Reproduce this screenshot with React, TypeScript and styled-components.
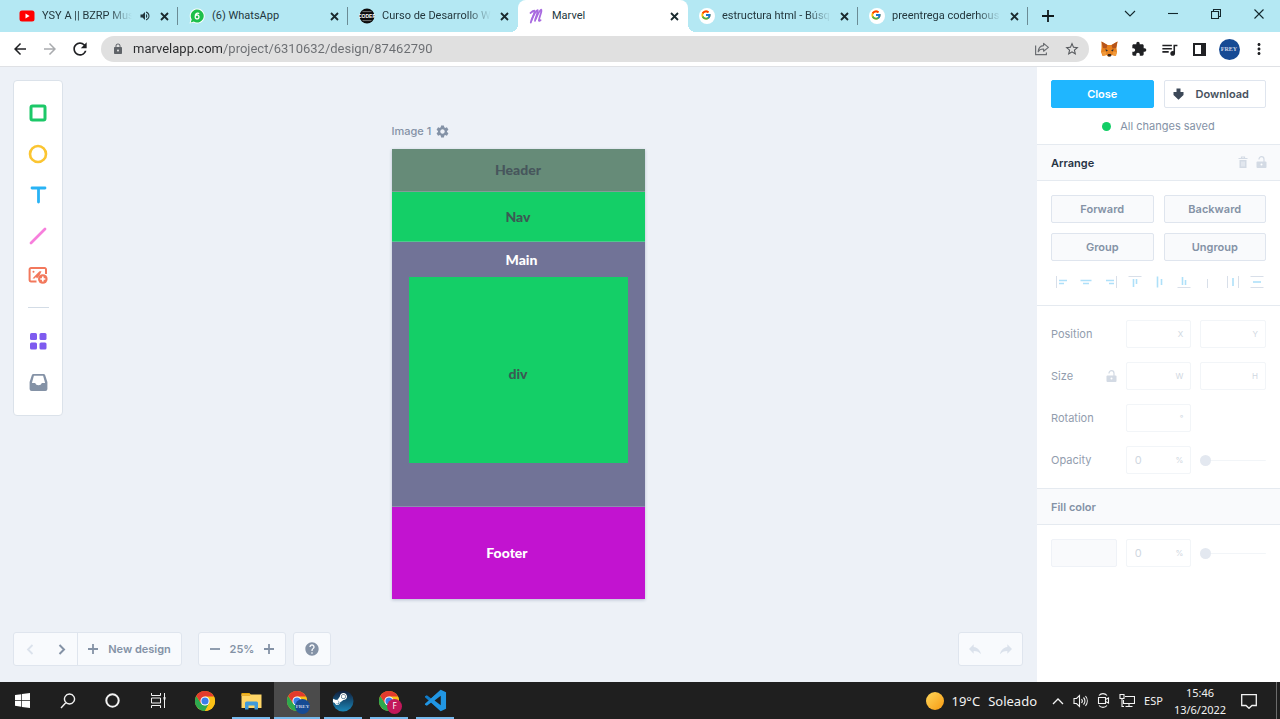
import React from "react";
import styled, { createGlobalStyle, css } from "styled-components";
import { FcGoogle } from "react-icons/fc";
import {
  MdArrowBack,
  MdArrowForward,
  MdRefresh,
  MdLock,
  MdExtension,
  MdQueueMusic,
  MdMoreVert,
  MdStarBorder,
  MdVolumeUp,
  MdSettings,
  MdHelp,
  MdReply,
} from "react-icons/md";
import { FaSteamSymbol } from "react-icons/fa";

const uiFont = `"Noto Sans", "Open Sans", sans-serif`;
const browserFont = `Roboto, "Noto Sans", sans-serif`;
const appFont = `Inter, "Liberation Sans", sans-serif`;

const GlobalStyle = createGlobalStyle`
  *, *::before, *::after { box-sizing: border-box; }
  body { margin: 0; background: #edf1f7; }
  button, input { font: inherit; color: inherit; margin: 0; }
  button { background: none; border: 0; padding: 0; cursor: pointer; }
  svg { display: block; flex: none; }
`;

const Desktop = styled.div`
  min-height: 100vh;
  display: flex;
  flex-direction: column;
  font-family: ${appFont};
`;

/* ---------- Browser chrome ---------- */

const TabStrip = styled.header`
  display: flex;
  height: 32px;
  padding-left: 8px;
  background: #b4e8f3;
  font-family: ${browserFont};
  font-size: 11px;
  color: #23373d;
`;

const Tab = styled.div<{ $active?: boolean; $divider?: boolean }>`
  position: relative;
  display: flex;
  align-items: center;
  flex: 0 1 170px;
  min-width: 0;
  gap: 7px;
  padding: 0 8px 0 11px;
  ${(p) =>
    p.$divider &&
    css`
      background: linear-gradient(#6b8c95, #6b8c95) right center / 1px 18px no-repeat;
    `}
  ${(p) =>
    p.$active &&
    css`
      background: #fff;
      border-radius: 8px 8px 0 0;
      &::before,
      &::after {
        content: "";
        position: absolute;
        bottom: 0;
        width: 8px;
        height: 8px;
      }
      &::before {
        left: -8px;
        background: radial-gradient(circle at 0 0, transparent 8px, #fff 8px);
      }
      &::after {
        right: -8px;
        background: radial-gradient(circle at 100% 0, transparent 8px, #fff 8px);
      }
    `}
`;

const TabTitle = styled.span<{ $fade?: boolean }>`
  flex: 1;
  min-width: 0;
  overflow: hidden;
  white-space: nowrap;
  line-height: 18px;
  ${(p) =>
    p.$fade &&
    css`
      mask-image: linear-gradient(90deg, #000 calc(100% - 24px), transparent);
    `}
`;

const TabClose = styled.button`
  display: grid;
  place-items: center;
  width: 12px;
  height: 16px;
  color: #1b2a2e;
`;

const NewTab = styled.button`
  display: grid;
  place-items: center;
  width: 40px;
  color: #101a1c;
`;

const WindowButtons = styled.div`
  display: flex;
  margin-left: auto;
`;

const WindowButton = styled.button`
  display: grid;
  place-items: center;
  width: 43px;
  height: 27px;
  color: #14282d;
`;

const Toolbar = styled.nav`
  display: flex;
  align-items: center;
  height: 35px;
  padding: 0 6px 0 5px;
  background: #fff;
  border-bottom: 1px solid #dfe1e5;
  font-family: ${browserFont};
`;

const ToolbarButton = styled.button<{ $color?: string }>`
  display: grid;
  place-items: center;
  width: 30px;
  height: 30px;
  color: ${(p) => p.$color ?? "#202124"};
`;

const Omnibox = styled.div`
  display: flex;
  align-items: center;
  flex: 1;
  min-width: 0;
  height: 26px;
  margin: 0 5px 0 6px;
  padding: 0 2px 0 11px;
  border-radius: 13px;
  background: #e0e0e0;
  color: #5f6368;
`;

const UrlInput = styled.input`
  flex: 1;
  min-width: 0;
  margin-left: 9px;
  padding: 0;
  border: 0;
  outline: 0;
  font-size: 13px;
  line-height: 20px;
  color: transparent;
  background: linear-gradient(90deg, #2b2c2e 90px, #6a6d71 90px);
  background-clip: text;
  -webkit-background-clip: text;
`;

const Avatar = styled.span<{ $size: number }>`
  display: grid;
  place-items: center;
  width: ${(p) => p.$size}px;
  height: ${(p) => p.$size}px;
  border-radius: 50%;
  background: #164a94;
  color: #c9d3e6;
  font-family: "Liberation Serif", serif;
  font-size: ${(p) => (p.$size > 16 ? 6 : 5)}px;
  font-weight: 700;
  line-height: 1;
`;

/* ---------- Editor ---------- */

const Editor = styled.main`
  display: flex;
  flex: 1;
`;

const Canvas = styled.section`
  flex: 1;
  min-width: 0;
  display: flex;
  flex-direction: column;
  justify-content: space-between;
  padding: 13px 14px 16px 13px;
  background: #edf1f7;
  color: #8492a6;
`;

const Stage = styled.div`
  display: grid;
  grid-template-columns: 1fr 253px 1fr;
  align-items: start;
`;

const ToolPanel = styled.aside`
  display: flex;
  flex-direction: column;
  align-items: center;
  width: 50px;
  padding: 11px 0 12px;
  border: 1px solid #dbe2ea;
  border-radius: 4px;
  background: #fff;
`;

const ToolButton = styled.button`
  display: grid;
  place-items: center;
  width: 100%;
  height: 41px;
`;

const ToolDivider = styled.hr`
  width: 21px;
  height: 1px;
  margin: 10px 0 13px;
  border: 0;
  background: #d3dce6;
`;

const Design = styled.div`
  padding-top: 41px;
`;

const DesignLabel = styled.button`
  display: flex;
  align-items: center;
  gap: 4px;
  height: 20px;
  margin-bottom: 8px;
  font-size: 11px;
  font-weight: 500;
`;

const Artboard = styled.div`
  display: flex;
  flex-direction: column;
  font-family: Lato, sans-serif;
  font-size: 14px;
  font-weight: 900;
  line-height: 18px;
  text-align: center;
  box-shadow: 0 1px 3px rgba(60, 80, 120, 0.3);
`;

const Block = styled.div<{ $fill: string; $ink: string; $height: number }>`
  display: flex;
  align-items: center;
  justify-content: center;
  height: ${(p) => p.$height}px;
  background: ${(p) => p.$fill};
  color: ${(p) => p.$ink};
  border-bottom: 1px solid rgba(190, 190, 215, 0.35);
`;

const FooterBlock = styled(Block)`
  padding-right: 22px;
  border-bottom: 0;
`;

const MainBlock = styled(Block)`
  flex-direction: column;
  justify-content: flex-start;
  padding: 9px 17px 0;
`;

const MainTitle = styled.div`
  padding-left: 7px;
  margin-bottom: 8px;
`;

const InnerBlock = styled(Block)`
  width: 100%;
  padding-top: 7px;
  border: 0;
`;

const BottomBar = styled.div`
  display: flex;
  height: 34px;
`;

const ControlGroup = styled.div<{ $space?: number; $end?: boolean }>`
  display: flex;
  align-items: stretch;
  margin-left: ${(p) => (p.$end ? "auto" : `${p.$space ?? 0}px`)};
  border: 1px solid #dfe5ee;
  border-radius: 3px;
  background: #f8fafd;
  font-size: 11px;
  font-weight: 600;
`;

const Control = styled.button<{ $width: number; $faint?: boolean; $ruled?: boolean }>`
  display: flex;
  align-items: center;
  justify-content: center;
  gap: 10px;
  width: ${(p) => p.$width}px;
  color: ${(p) => (p.$faint ? "#dbe2ec" : "#8492a6")};
  border-left: ${(p) => (p.$ruled ? "1px solid #dfe5ee" : "0")};
`;

const ZoomValue = styled.span`
  width: 22px;
  align-self: center;
  display: flex;
  justify-content: center;
`;

/* ---------- Properties sidebar ---------- */

const Sidebar = styled.aside`
  flex: none;
  width: 243px;
  background: #fff;
  color: #8492a6;
  font-size: 11px;
  line-height: 16px;
`;

const Section = styled.div`
  display: flex;
  flex-direction: column;
  padding: 14px;
`;

const TopSection = styled(Section)`
  padding: 13px 14px 10px;
`;

const ArrangeSection = styled(Section)`
  gap: 10px;
  padding-bottom: 16px;
`;

const FieldSection = styled(Section)`
  gap: 14px;
  border-top: 1px solid #e5eaf0;
`;

const ButtonGrid = styled.div`
  display: grid;
  grid-template-columns: 1fr 1fr;
  gap: 10px;
`;

const PanelButton = styled.button<{ $kind?: "primary" | "plain" }>`
  display: flex;
  align-items: center;
  justify-content: center;
  gap: 12px;
  height: 28px;
  border: 1px solid #dfe5ee;
  border-radius: 2px;
  font-weight: 600;
  background: #f9fafc;
  color: #8492a6;
  ${(p) =>
    p.$kind === "primary" &&
    css`
      background: #1fb6ff;
      border-color: #1fb6ff;
      color: #fff;
    `}
  ${(p) =>
    p.$kind === "plain" &&
    css`
      padding-right: 8px;
      background: #fff;
      color: #47525e;
    `}
`;

const SaveStatus = styled.p`
  display: flex;
  align-items: center;
  justify-content: center;
  gap: 9px;
  margin: 10px 0 0;
  &::before {
    content: "";
    width: 9px;
    height: 9px;
    border-radius: 50%;
    background: #13ce66;
  }
`;

const SectionTitle = styled.h2<{ $strong?: boolean }>`
  display: flex;
  align-items: center;
  height: 37px;
  margin: 0;
  padding: 0 13px 0 14px;
  border: solid #e5eaf0;
  border-width: 1px 0;
  background: #f9fafc;
  font-size: 11px;
  font-weight: 600;
  color: ${(p) => (p.$strong ? "#273444" : "#8492a6")};
`;

const TitleActions = styled.span`
  display: flex;
  gap: 8px;
  margin-left: auto;
  color: #d3dae4;
`;

const AlignRow = styled.div`
  display: flex;
  justify-content: space-between;
  padding: 4px 2px 0 4px;
`;

const FieldRow = styled.div`
  display: grid;
  grid-template-columns: repeat(3, 1fr);
  gap: 9px;
  align-items: center;
`;

const FieldLabel = styled.label`
  display: flex;
  align-items: center;
  justify-content: space-between;
  color: #929dae;
`;

const FieldBox = styled.span`
  display: flex;
  align-items: center;
  height: 28px;
  padding: 0 7px 0 8px;
  border: 1px solid #f2f5f8;
  border-radius: 2px;
  color: #d0d7e1;
`;

const FieldInput = styled.input`
  flex: 1;
  width: 0;
  min-width: 0;
  padding: 0;
  border: 0;
  outline: 0;
  background: none;
`;

const Unit = styled.span`
  font-size: 8px;
  line-height: 12px;
`;

const Slider = styled.input`
  appearance: none;
  width: 100%;
  height: 12px;
  background: linear-gradient(#f2f5f8, #f2f5f8) center / 100% 1px no-repeat;
  &::-webkit-slider-thumb {
    appearance: none;
    width: 11px;
    height: 11px;
    border-radius: 50%;
    background: #e3e8f0;
  }
`;

const Swatch = styled.button`
  height: 28px;
  border: 1px solid #eff2f7;
  border-radius: 2px;
  background: #f9fafc;
`;

/* ---------- Taskbar ---------- */

const Taskbar = styled.footer`
  display: flex;
  align-items: stretch;
  height: 37px;
  background: #1f1f1f;
  color: #f2f2f2;
  font-family: ${uiFont};
`;

const SystemButton = styled.button`
  display: grid;
  place-items: center;
  width: 45px;
`;

const Pinned = styled.div`
  display: flex;
  margin-left: 2px;
`;

const PinnedApp = styled.button<{ $open?: boolean; $active?: boolean }>`
  display: grid;
  place-items: center;
  width: 46px;
  background: ${(p) =>
    p.$active
      ? "linear-gradient(#76b9ed, #76b9ed) bottom / 46px 2px no-repeat, #4b4b4b"
      : p.$open
      ? "linear-gradient(#76b9ed, #76b9ed) bottom / 38px 2px no-repeat"
      : "none"};
`;

const BadgedIcon = styled.span`
  position: relative;
`;

const IconBadge = styled.span`
  position: absolute;
  left: 9px;
  top: 9px;
`;

const ProfileInitial = styled(Avatar)`
  background: #c2185b;
  color: #fff;
  font-family: ${uiFont};
  font-size: 8px;
  font-weight: 400;
`;

const Tray = styled.div`
  display: flex;
  align-items: center;
  margin-left: auto;
`;

const Weather = styled.button`
  display: flex;
  align-items: center;
  gap: 8px;
  margin-right: 9px;
  font-size: 13px;
  line-height: 20px;
`;

const Sun = styled.span`
  width: 18px;
  height: 18px;
  border-radius: 50%;
  background: linear-gradient(135deg, #ffd75a, #f79a12);
`;

const TrayButton = styled.button`
  display: grid;
  place-items: center;
  width: 23px;
  height: 36px;
`;

const Language = styled.button`
  width: 31px;
  font-size: 11px;
`;

const Clock = styled.time`
  width: 62px;
  font-size: 11px;
  line-height: 17px;
  text-align: center;
`;

const Notifications = styled.button`
  display: grid;
  place-items: center;
  width: 36px;
  height: 36px;
`;

const ShowDesktop = styled.button`
  align-self: stretch;
  width: 4px;
  margin-left: 9px;
  border-left: 1px solid #6b6b6b;
`;

/* ---------- Drawings ---------- */

const YouTubeIcon = () => (
  <svg width="16" height="16" viewBox="0 0 16 16">
    <rect x="0.5" y="2.5" width="15" height="11" rx="2.5" fill="#f00" />
    <path d="M6.5 5.6v4.8L10.6 8z" fill="#fff" />
  </svg>
);

const WhatsAppIcon = () => (
  <svg width="16" height="16" viewBox="0 0 16 16">
    <path d="M0.5 15.6 1.6 11.6A7.5 7.5 0 1 1 4.6 14.6z" fill="#fff" />
    <path d="M1.7 14.4 2.7 11.4A6.5 6.5 0 1 1 4.8 13.5z" fill="#1dbf4a" />
    <path d="M9.800 5.300C7.500 4.400 6.200 6.200 6.200 8.900a1.900 2 0 1 0 .1-.6" fill="none" stroke="#fff" strokeWidth="1.300" strokeLinecap="round" />
  </svg>
);

const CoderIcon = () => (
  <svg width="16" height="16" viewBox="0 0 16 16">
    <circle cx="8" cy="8" r="7.5" fill="#0b0b0b" />
    <path d="M3.500 3.600h9M3.500 12.600h9" stroke="#8a8a8a" strokeWidth="0.8" />
    <text x="8" y="9.800" fontSize="5" fontWeight="700" textAnchor="middle" fill="#fff" fontFamily="Liberation Sans">CODER</text>
  </svg>
);

const MarvelIcon = () => (
  <svg width="16" height="16" viewBox="0 0 16 16" fill="none" stroke="#a96be0" strokeLinecap="round" strokeLinejoin="round">
    <path d="M1.500 5C3.500 3.500 5.300 2 5.600 2.800 5.800 5 2.600 11 1.800 14.500" strokeWidth="1.8" />
    <path d="M2.600 12C4.500 7.500 7.300 2.400 8.700 2.200 9.800 2.600 6.400 9.500 6 12.800" strokeWidth="1.8" />
    <path d="M6.700 11C8.500 7 10.700 1.900 12.200 1.700 13.500 2 10.100 9.500 9.900 12.400 10.200 13.400 11 12.800 11.600 12.200" strokeWidth="1.8" />
  </svg>
);

const GoogleIcon = () => (
  <svg width="16" height="16" viewBox="0 0 16 16">
    <circle cx="8" cy="8" r="8" fill="#fff" />
    <FcGoogle x="1.5" y="1.5" width="13" height="13" />
  </svg>
);

const FoxIcon = () => (
  <svg width="17" height="16" viewBox="0 0 34 32">
    <path d="M1 1 13 8h8L33 1l-2 13 1 8-3 8-8-2-3 3h-4l-3-3-8 2-3-8 1-8z" fill="#e8821e" />
    <path d="M1 1 13 8l-2 7-7-1zM33 1 21 8l2 7 7-1z" fill="#b5541c" />
    <path d="M2 22l8-1 1 7-7 2zM32 22l-8-1-1 7 7 2z" fill="#f09a3c" />
    <path d="M9 16l5 3-4 2zM25 16l-5 3 4 2z" fill="#2b2f38" />
    <path d="M14 26h6l1 3-2 2h-4l-2-2z" fill="#3a2a22" />
  </svg>
);

const ShareIcon = () => (
  <svg width="16" height="16" viewBox="0 0 16 16" fill="none" stroke="currentColor" strokeWidth="1.2" strokeLinejoin="round">
    <path d="M1.6 4.5v9.2h10.8v-2.2" />
    <path d="M9.6 2.4 14.4 6.4 9.6 10.2V8C6.8 7.9 5.2 8.8 4.2 10.8 4.4 7.2 6.2 4.9 9.6 4.6z" />
  </svg>
);

const SidePanelIcon = () => (
  <svg width="13" height="13" viewBox="0 0 13 13">
    <rect x="1" y="1" width="11" height="11" fill="none" stroke="currentColor" strokeWidth="2" />
    <rect x="8" y="1" width="4" height="11" fill="currentColor" />
  </svg>
);

const ImageToolIcon = () => (
  <svg width="20" height="20" viewBox="0 0 20 20" fill="none" stroke="#f2785c">
    <path d="M8.500 14.500H3A1.400 1.400 0 0 1 1.600 13V2.400A1.400 1.400 0 0 1 3 1h13.500A1.400 1.400 0 0 1 18 2.400V7" strokeWidth="2" />
    <path d="M4.500 11.500h2l1.500-1.500 1 1.500L11.500 8.500 13.500 4.200h-2L7.500 8.200z" fill="#f2785c" stroke="none" />
    <circle cx="5.500" cy="4.800" r="1" fill="#f2785c" stroke="none" />
    <circle cx="14.800" cy="12" r="4.800" fill="#f2785c" stroke="none" />
    <path d="M14.800 9.500v5M12.300 12h5" stroke="#fff" strokeWidth="1.700" />
  </svg>
);

const InboxIcon = () => (
  <svg width="19" height="19" viewBox="0 0 19 19">
    <path d="M4.500 1h10a1.800 1.800 0 0 1 1.700 1.200L18.400 9v7a2 2 0 0 1-2 2H2.600a2 2 0 0 1-2-2V9L2.800 2.200A1.800 1.800 0 0 1 4.500 1z" fill="#8492a6" />
    <path d="M4.900 2.800h9.200l2 7.200h-3.300c-.6 1.300-1.700 2.300-3.300 2.300S6.800 11.300 6.200 10H2.900z" fill="#fff" />
  </svg>
);

const TrashIcon = () => (
  <svg width="10" height="13" viewBox="0 0 10 13" fill="none" stroke="currentColor">
    <path d="M0.500 2.500h9M3.500 2V1h3v1" strokeWidth="1.200" />
    <path d="M1.500 4h7v8h-7z" fill="currentColor" stroke="none" />
    <path d="M4 5.500v5M6 5.500v5" stroke="#f9fafc" strokeWidth="0.800" />
  </svg>
);

const UnlockIcon = () => (
  <svg width="11" height="13" viewBox="0 0 11 13">
    <path d="M3 3.500V3.200a2.500 2.500 0 0 1 5 0v3" fill="none" stroke="currentColor" strokeWidth="1.200" />
    <rect x="0.500" y="5.500" width="10" height="6.500" rx="1" fill="currentColor" />
    <circle cx="5.500" cy="8.500" r="1" fill="#fff" />
  </svg>
);

const alignIcons: { name: string; guide: string; bars: string }[] = [
  { name: "Align left", guide: "M1.500 1v12", bars: "M4 5.500h8M4 8.500h5" },
  { name: "Align horizontal centers", guide: "", bars: "M1.500 5.500h11M4 8.500h6" },
  { name: "Align right", guide: "M12.500 1v12", bars: "M2 5.500h8M5 8.500h5" },
  { name: "Align top", guide: "M0.500 1.500h13", bars: "M5.500 4v8M8.500 4v5" },
  { name: "Align vertical centers", guide: "", bars: "M4.500 1.500v11M8.500 4v6" },
  { name: "Align bottom", guide: "M0.500 12.500h13", bars: "M5.500 2v8M8.500 5v5" },
  { name: "Distribute", guide: "M6.500 4v9", bars: "" },
  { name: "Distribute horizontally", guide: "M1.500 1v12M12.500 1v12", bars: "M7 3v8" },
  { name: "Distribute vertically", guide: "M0.500 1.500h13M0.500 12.500h13", bars: "M3 7h8" },
];

const AlignIcon = ({ guide, bars }: { guide: string; bars: string }) => (
  <svg width="14" height="14" viewBox="0 0 14 14" fill="none">
    <path d={guide} stroke="#d8dfe9" />
    <path d={bars} stroke="#aee0f9" strokeWidth="1.600" />
  </svg>
);

const ChromeIcon = () => (
  <svg width="22" height="22" viewBox="0 0 48 48">
    <circle cx="24" cy="24" r="22" fill="#fbc116" />
    <path d="M4.950 13A22 22 0 0 0 24 46l9.500-16.500L24 34 15.300 29z" fill="#2da94f" />
    <path d="M24 14h19.600A22 22 0 0 1 24 46l8.700-17z" fill="#fbc116" />
    <path d="M4.950 13A22 22 0 0 1 43.600 14H24l-8.700 15z" fill="#e33b2e" />
    <circle cx="24" cy="24" r="10" fill="#fff" />
    <circle cx="24" cy="24" r="7.800" fill="#3b7de9" />
  </svg>
);

const FolderIcon = () => (
  <svg width="21" height="18" viewBox="0 0 21 18">
    <path d="M0.500 1h8l1.500 2H0.500z" fill="#e5a50a" />
    <path d="M0.500 2.500h20V16h-20z" fill="#ffd667" />
    <path d="M0.500 2.500h8l1 1.500h-9z" fill="#e9ae2b" />
    <path d="M4 17.500V11a1.500 1.500 0 0 1 1.500-1.500h10A1.500 1.500 0 0 1 17 11v6.500h-3.500v-4h-6v4z" fill="#3f9bdc" />
  </svg>
);

const SteamIcon = () => (
  <svg width="22" height="22" viewBox="0 0 22 22">
    <defs>
      <linearGradient id="steam" x1="0" y1="0" x2="0" y2="1">
        <stop offset="0" stopColor="#111d3a" />
        <stop offset="1" stopColor="#1b87b8" />
      </linearGradient>
    </defs>
    <circle cx="11" cy="11" r="10.500" fill="url(#steam)" />
    <FaSteamSymbol x="0" y="1" width="20" height="20" color="#fff" />
  </svg>
);

const CodeEditorIcon = () => (
  <svg width="23" height="23" viewBox="0 0 24 24">
    <path d="M17.500 0.700 7.500 9.900 3 6.500 1 7.500v1L17.500 23.300z" fill="#0f7cc9" />
    <path d="M17.500 23.300 7.500 14.100 3 17.500 1 16.500v-1L17.500 0.700 23 3.300v17.400z" fill="#2196e3" />
    <path d="M17.500 7v10L11 12z" fill="#1f1f1f" />
  </svg>
);

const WindowsIcon = () => (
  <svg width="15" height="15" viewBox="0 0 15 15" fill="#fff">
    <path d="M0 2.100 6.300 1.200v5.900H0zM7 1.100 15 0v7.100H7zM0 7.800h6.300v5.900L0 12.800zM7 7.800h8V15l-8-1.100z" />
  </svg>
);

const TaskViewIcon = () => (
  <svg width="16" height="15" viewBox="0 0 16 15" fill="none" stroke="#f2f2f2">
    <path d="M1.500 0v2.500h9V0M1.500 15v-2.500h9V15M1.500 5h9v5h-9zM14.500 0v15" />
    <rect x="13.500" y="4" width="2" height="2.500" fill="#f2f2f2" stroke="none" />
  </svg>
);

const Line = ({ d, w = 16, h = 16, sw = 1.1 }: { d: string; w?: number; h?: number; sw?: number }) => (
  <svg width={w} height={h} viewBox={`0 0 ${w} ${h}`} fill="none" stroke="currentColor" strokeWidth={sw}>
    <path d={d} />
  </svg>
);

/* ---------- Page data ---------- */

const tabs = [
  { title: "YSY A || BZRP Mus", icon: <YouTubeIcon />, fade: true, sound: true, divider: true },
  { title: "(6) WhatsApp", icon: <WhatsAppIcon />, divider: true },
  { title: "Curso de Desarrollo W", icon: <CoderIcon />, fade: true },
  { title: "Marvel", icon: <MarvelIcon />, active: true },
  { title: "estructura html - Búsq", icon: <GoogleIcon />, fade: true, divider: true },
  { title: "preentrega coderhous", icon: <GoogleIcon />, fade: true, divider: true },
];

const Field = ({ id, label, unit, value = "" }: { id: string; label: string; unit: string; value?: string }) => (
  <FieldBox>
    <FieldInput id={id} aria-label={label} defaultValue={value} />
    <Unit>{unit}</Unit>
  </FieldBox>
);

const Browser = () => (
  <>
    <TabStrip>
      {tabs.map((t) => (
        <Tab key={t.title} $active={t.active} $divider={t.divider}>
          {t.icon}
          <TabTitle $fade={t.fade}>{t.title}</TabTitle>
          {t.sound && <MdVolumeUp size={12} />}
          <TabClose aria-label={`Close ${t.title}`}>
            <Line d="M1 1l7 7M8 1 1 8" w={9} h={9} sw={1.8} />
          </TabClose>
        </Tab>
      ))}
      <NewTab aria-label="New tab">
        <Line d="M6 0v12M0 6h12" w={12} h={12} sw={1.8} />
      </NewTab>
      <WindowButtons>
        <WindowButton aria-label="Search tabs"><Line d="M1 1l5 5 5-5" w={12} h={8} /></WindowButton>
        <WindowButton aria-label="Minimize"><Line d="M0 1.500h10" w={10} h={3} /></WindowButton>
        <WindowButton aria-label="Restore"><Line d="M0.500 2.500h7v7h-7zM2.500 2.500v-2h7v7h-2" w={10} h={10} /></WindowButton>
        <WindowButton aria-label="Close window"><Line d="M0.500 0.500l9 9M9.500 0.500l-9 9" w={10} h={10} /></WindowButton>
      </WindowButtons>
    </TabStrip>
    <Toolbar>
      <ToolbarButton aria-label="Back"><MdArrowBack size={18} /></ToolbarButton>
      <ToolbarButton aria-label="Forward" $color="#a9abae"><MdArrowForward size={18} /></ToolbarButton>
      <ToolbarButton aria-label="Reload"><MdRefresh size={20} /></ToolbarButton>
      <Omnibox>
        <MdLock size={12} />
        <UrlInput aria-label="Address" defaultValue="marvelapp.com/project/6310632/design/87462790" />
        <ToolbarButton aria-label="Share" $color="#6b6e72"><ShareIcon /></ToolbarButton>
        <ToolbarButton aria-label="Bookmark" $color="#55585c"><MdStarBorder size={16} /></ToolbarButton>
      </Omnibox>
      <ToolbarButton aria-label="Wallet extension"><FoxIcon /></ToolbarButton>
      <ToolbarButton aria-label="Extensions"><MdExtension size={16} /></ToolbarButton>
      <ToolbarButton aria-label="Media"><MdQueueMusic size={19} /></ToolbarButton>
      <ToolbarButton aria-label="Side panel"><SidePanelIcon /></ToolbarButton>
      <ToolbarButton aria-label="Profile"><Avatar $size={21}>FREY</Avatar></ToolbarButton>
      <ToolbarButton aria-label="Menu"><MdMoreVert size={18} /></ToolbarButton>
    </Toolbar>
  </>
);

const Tools = () => (
  <ToolPanel>
    <ToolButton aria-label="Rectangle">
      <svg width="18" height="18" viewBox="0 0 18 18"><rect x="2" y="2" width="14" height="14" rx="1.500" fill="none" stroke="#1cc868" strokeWidth="3" /></svg>
    </ToolButton>
    <ToolButton aria-label="Ellipse">
      <svg width="20" height="20" viewBox="0 0 20 20"><circle cx="10" cy="10" r="8" fill="none" stroke="#fbc531" strokeWidth="2.600" /></svg>
    </ToolButton>
    <ToolButton aria-label="Text">
      <svg width="17" height="18" viewBox="0 0 17 18"><path d="M2 2h13M8.500 2v14" fill="none" stroke="#29b3f5" strokeWidth="2.800" strokeLinecap="round" /></svg>
    </ToolButton>
    <ToolButton aria-label="Line">
      <svg width="18" height="18" viewBox="0 0 18 18"><path d="M2 16 16 2" fill="none" stroke="#f77fdc" strokeWidth="2.800" strokeLinecap="round" /></svg>
    </ToolButton>
    <ToolButton aria-label="Image"><ImageToolIcon /></ToolButton>
    <ToolDivider />
    <ToolButton aria-label="Components">
      <svg width="17" height="17" viewBox="0 0 17 17" fill="#7e5bef">
        <rect width="7" height="7" rx="1.500" /><rect x="9.500" width="7" height="7" rx="1.500" />
        <rect y="9.500" width="7" height="7" rx="1.500" /><rect x="9.500" y="9.500" width="7" height="7" rx="1.500" />
      </svg>
    </ToolButton>
    <ToolButton aria-label="Library"><InboxIcon /></ToolButton>
  </ToolPanel>
);

const DesignCanvas = () => (
  <Canvas>
    <Stage>
      <Tools />
      <Design>
        <DesignLabel>Image 1 <MdSettings size={15} /></DesignLabel>
        <Artboard>
          <Block $fill="#668b78" $ink="#47565c" $height={43}>Header</Block>
          <Block $fill="#14cf67" $ink="#3b5a54" $height={50}>Nav</Block>
          <MainBlock $fill="#717397" $ink="#fff" $height={265}>
            <MainTitle>Main</MainTitle>
            <InnerBlock $fill="#14cf67" $ink="#3b5a54" $height={186}>div</InnerBlock>
          </MainBlock>
          <FooterBlock $fill="#c213d0" $ink="#fff" $height={92}>Footer</FooterBlock>
        </Artboard>
      </Design>
    </Stage>
    <BottomBar>
      <ControlGroup>
        <Control $width={32} $faint aria-label="Previous design"><Line d="M6.500 1 2 5.500 6.500 10" w={8} h={11} sw={1.8} /></Control>
        <Control $width={31} aria-label="Next design"><Line d="M1.500 1 6 5.500 1.500 10" w={8} h={11} sw={2} /></Control>
        <Control $width={104} $ruled><Line d="M5 0v10M0 5h10" w={10} h={10} sw={1.8} />New design</Control>
      </ControlGroup>
      <ControlGroup $space={16}>
        <Control $width={32} aria-label="Zoom out"><Line d="M0 5h10" w={10} h={10} sw={1.8} /></Control>
        <ZoomValue>25%</ZoomValue>
        <Control $width={32} aria-label="Zoom in"><Line d="M5 0v10M0 5h10" w={10} h={10} sw={1.8} /></Control>
      </ControlGroup>
      <ControlGroup $space={7}>
        <Control $width={36} aria-label="Help"><MdHelp size={16} /></Control>
      </ControlGroup>
      <ControlGroup $end>
        <Control $width={31} $faint aria-label="Undo"><MdReply size={16} /></Control>
        <Control $width={32} $faint aria-label="Redo"><MdReply size={16} transform="scale(-1 1)" /></Control>
      </ControlGroup>
    </BottomBar>
  </Canvas>
);

const Properties = () => (
  <Sidebar>
    <TopSection>
      <ButtonGrid>
        <PanelButton $kind="primary">Close</PanelButton>
        <PanelButton $kind="plain">
          <svg width="11" height="12" viewBox="0 0 11 12"><path d="M3.500 0.500h4V4H10.500v3L5.500 11.800 0.500 7V4h3z" fill="#3c4858" /></svg>
          Download
        </PanelButton>
      </ButtonGrid>
      <SaveStatus>All changes saved</SaveStatus>
    </TopSection>
    <SectionTitle $strong>
      Arrange
      <TitleActions><TrashIcon /><UnlockIcon /></TitleActions>
    </SectionTitle>
    <ArrangeSection>
      <ButtonGrid>
        <PanelButton>Forward</PanelButton>
        <PanelButton>Backward</PanelButton>
        <PanelButton>Group</PanelButton>
        <PanelButton>Ungroup</PanelButton>
      </ButtonGrid>
      <AlignRow>
        {alignIcons.map((a) => (
          <button key={a.name} aria-label={a.name}><AlignIcon guide={a.guide} bars={a.bars} /></button>
        ))}
      </AlignRow>
    </ArrangeSection>
    <FieldSection>
      <FieldRow>
        <FieldLabel htmlFor="pos-x">Position</FieldLabel>
        <Field id="pos-x" label="Position X" unit="X" />
        <Field id="pos-y" label="Position Y" unit="Y" />
      </FieldRow>
      <FieldRow>
        <FieldLabel htmlFor="size-w">Size <TitleActions><UnlockIcon /></TitleActions></FieldLabel>
        <Field id="size-w" label="Width" unit="W" />
        <Field id="size-h" label="Height" unit="H" />
      </FieldRow>
      <FieldRow>
        <FieldLabel htmlFor="rotation">Rotation</FieldLabel>
        <Field id="rotation" label="Rotation" unit="°" />
      </FieldRow>
      <FieldRow>
        <FieldLabel htmlFor="opacity">Opacity</FieldLabel>
        <Field id="opacity" label="Opacity" unit="%" value="0" />
        <Slider type="range" aria-label="Opacity slider" defaultValue={0} />
      </FieldRow>
    </FieldSection>
    <SectionTitle>Fill color</SectionTitle>
    <Section>
      <FieldRow>
        <Swatch aria-label="Fill color" />
        <Field id="fill-opacity" label="Fill opacity" unit="%" value="0" />
        <Slider type="range" aria-label="Fill opacity slider" defaultValue={0} />
      </FieldRow>
    </Section>
  </Sidebar>
);

const SystemTaskbar = () => (
  <Taskbar>
    <SystemButton aria-label="Start"><WindowsIcon /></SystemButton>
    <SystemButton aria-label="Search"><Line d="M6 9.500 1 15M9.500 1a5 5 0 1 0 0.010 0z" sw={1.4} /></SystemButton>
    <SystemButton aria-label="Cortana">
      <svg width="15" height="15" viewBox="0 0 15 15"><circle cx="7.500" cy="7.500" r="6.200" fill="none" stroke="#f2f2f2" strokeWidth="2" /></svg>
    </SystemButton>
    <SystemButton aria-label="Task view"><TaskViewIcon /></SystemButton>
    <Pinned>
      <PinnedApp aria-label="Chrome"><ChromeIcon /></PinnedApp>
      <PinnedApp $open aria-label="File explorer"><FolderIcon /></PinnedApp>
      <PinnedApp $open $active aria-label="Chrome, first profile">
        <BadgedIcon><ChromeIcon /><IconBadge><Avatar $size={15}>FREY</Avatar></IconBadge></BadgedIcon>
      </PinnedApp>
      <PinnedApp $open aria-label="Steam"><SteamIcon /></PinnedApp>
      <PinnedApp $open aria-label="Chrome, second profile">
        <BadgedIcon><ChromeIcon /><IconBadge><ProfileInitial $size={15}>F</ProfileInitial></IconBadge></BadgedIcon>
      </PinnedApp>
      <PinnedApp $open aria-label="Code editor"><CodeEditorIcon /></PinnedApp>
    </Pinned>
    <Tray>
      <Weather><Sun /><span>19°C</span><span>Soleado</span></Weather>
      <TrayButton aria-label="Show hidden icons"><Line d="M1 7l5-5 5 5" w={12} h={8} sw={1.3} /></TrayButton>
      <TrayButton aria-label="Volume"><Line d="M1 5.500h2.500L6.500 2.500v11l-3-3H1zM8.500 6a3 3 0 0 1 0 4M10.500 4.500a5 5 0 0 1 0 7M12.500 3a8 8 0 0 1 0 10" /></TrayButton>
      <TrayButton aria-label="Meet now"><Line d="M1.500 5.500h7v6h-7zM8.500 7.500l3-1.500v5l-3-1.500M2 3.500C4 1 8 1 10 3.500M2 13.500C4 16 8 16 10 13.500" w={13} h={17} /></TrayButton>
      <TrayButton aria-label="Network"><Line d="M6 3.500h9.500v7H4.500V7M10 10.500v3M6.500 13.500h7M1 1.500h4v4H1zM3 5.500v8h2" /></TrayButton>
      <Language>ESP</Language>
      <Clock>15:46<br />13/6/2022</Clock>
      <Notifications aria-label="Notifications"><Line d="M0.700 1.700h14.600v10.800h-4.300L8 15.300 5 12.500H0.700z" sw={1.3} /></Notifications>
      <ShowDesktop aria-label="Show desktop" />
    </Tray>
  </Taskbar>
);

export default function App() {
  return (
    <Desktop>
      <GlobalStyle />
      <Browser />
      <Editor>
        <DesignCanvas />
        <Properties />
      </Editor>
      <SystemTaskbar />
    </Desktop>
  );
}
